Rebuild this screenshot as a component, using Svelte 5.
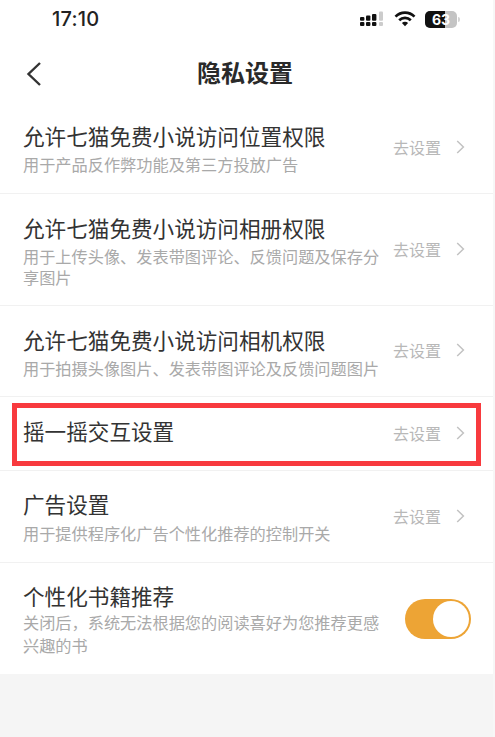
<script>
  const rows = [
    { title: '允许七猫免费小说访问位置权限', sub: '用于产品反作弊功能及第三方投放广告', h: 'r1' },
    { title: '允许七猫免费小说访问相册权限', sub: '用于上传头像、发表带图评论、反馈问题及保存分享图片', h: 'r2' },
    { title: '允许七猫免费小说访问相机权限', sub: '用于拍摄头像图片、发表带图评论及反馈问题图片', h: 'r3' },
    { title: '摇一摇交互设置', sub: '', h: 'r4', boxed: true },
    { title: '广告设置', sub: '用于提供程序化广告个性化推荐的控制开关', h: 'r5' }
  ];
</script>

<div class="page">
  <div class="status">
    <span class="time">17:10</span>
    <div class="icons">
      <svg width="26" height="16" viewBox="0 0 26 16">
        <g fill="#111">
          <rect x="1" y="6" width="4.4" height="3.8" rx="1"/><rect x="1" y="11" width="4.4" height="4" rx="1"/>
          <rect x="7" y="4.5" width="4.4" height="5.3" rx="1"/><rect x="7" y="11" width="4.4" height="4" rx="1"/>
          <rect x="13" y="3" width="4.4" height="6.8" rx="1"/><rect x="13" y="11" width="4.4" height="4" rx="1"/>
        </g>
        <g fill="#ccc">
          <rect x="20" y="0.5" width="4" height="9.3" rx="1"/><rect x="20" y="11" width="4" height="4" rx="1"/>
        </g>
      </svg>
      <svg class="wifi" width="22" height="16" viewBox="0 0 22 16">
        <path d="M1.5 5.6 A13.5 13.5 0 0 1 20.5 5.6" fill="none" stroke="#111" stroke-width="2.7"/>
        <path d="M5.2 9.2 A8.3 8.3 0 0 1 16.8 9.2" fill="none" stroke="#111" stroke-width="2.7"/>
        <path d="M7.9 12 L11 15.2 L14.1 12 A4.4 4.4 0 0 0 7.9 12Z" fill="#111"/>
      </svg>
      <div class="battery"><div class="fill"></div><span>63</span></div>
      <div class="nub"></div>
    </div>
  </div>

  <div class="nav">
    <svg class="back" width="18" height="26" viewBox="0 0 18 26">
      <path d="M15 2 L3.5 13 L15 24" fill="none" stroke="#333" stroke-width="2.4"/>
    </svg>
    <h1>隐私设置</h1>
  </div>

  <div class="list">
    {#each rows as row}
      <div class="row {row.h}">
        <div class="text">
          <div class="title">{row.title}</div>
          {#if row.sub}<div class="sub">{row.sub}</div>{/if}
        </div>
        <div class="action">
          <span>去设置</span>
          <svg width="9" height="14" viewBox="0 0 9 14">
            <path d="M1.2 1 L7.4 7 L1.2 13" fill="none" stroke="#c2c2c2" stroke-width="1.5"/>
          </svg>
        </div>
        {#if row.boxed}<div class="redbox"></div>{/if}
      </div>
    {/each}
    <div class="row r6">
      <div class="text">
        <div class="title">个性化书籍推荐</div>
        <div class="sub">关闭后，系统无法根据您的阅读喜好为您推荐更感兴趣的书</div>
      </div>
      <div class="toggle"><div class="knob"></div></div>
    </div>
  </div>
</div>

<style>
  :global(body) {
    margin: 0;
    background: #f5f5f5;
  }
  .page {
    width: 493px;
    height: 737px;
    background: #f5f5f5;
    border-right: 2px solid #f7f7f7;
    font-family: "Noto Sans CJK SC", "Noto Sans", sans-serif;
    overflow: hidden;
  }
  .status {
    height: 38px;
    background: #fff;
    display: flex;
    justify-content: space-between;
    align-items: center;
    padding: 0 33px 0 52px;
  }
  .time {
    font-family: Inter, "Liberation Sans", sans-serif;
    font-size: 20px;
    font-weight: 500;
    color: #222;
    letter-spacing: 0.2px;
  }
  .icons {
    display: flex;
    align-items: center;
  }
  .wifi {
    margin-left: 9px;
  }
  .battery {
    position: relative;
    margin-left: 9px;
    width: 32px;
    height: 17px;
    border-radius: 5px;
    background: #c4c4c4;
    overflow: hidden;
    display: flex;
    align-items: center;
    justify-content: center;
  }
  .fill {
    position: absolute;
    left: 0;
    top: 0;
    bottom: 0;
    width: 20px;
    background: #111;
  }
  .battery span {
    position: relative;
    color: #fff;
    font-family: Inter, "Liberation Sans", sans-serif;
    font-size: 14px;
    font-weight: 700;
    line-height: 17px;
  }
  .nub {
    width: 2px;
    height: 5px;
    margin-left: 1px;
    background: #d4d4d4;
    border-radius: 0 2px 2px 0;
  }
  .nav {
    height: 72px;
    background: #fff;
    position: relative;
    display: flex;
    align-items: center;
    justify-content: center;
  }
  .back {
    position: absolute;
    left: 25px;
    top: 23px;
  }
  h1 {
    margin: 0 3px 4px 0;
    font-size: 24px;
    font-weight: 700;
    color: #2a2a2a;
    line-height: 68px;
  }
  .list {
    background: #fff;
  }
  .row {
    position: relative;
    display: flex;
    justify-content: space-between;
    padding: 0 19px 0 23px;
    box-sizing: border-box;
    border-bottom: 1px solid #f1f1f1;
  }
  .r1 { height: 84px; }
  .r2 { height: 112px; }
  .r3 { height: 91px; }
  .r4 { height: 74px; }
  .r5 { height: 92px; }
  .r6 { height: 111px; border-bottom: 0; }
  .text {
    width: 362px;
    padding-top: 11px;
  }
  .r2 .text, .r3 .text, .r4 .text {
    padding-top: 19px;
  }
  .r5 .text, .r6 .text {
    padding-top: 18px;
  }
  .title {
    font-size: 21.6px;
    line-height: 30px;
    color: #333;
  }
  .sub {
    margin-top: 3px;
    font-size: 16.2px;
    line-height: 21px;
    color: #a9a9a9;
  }
  .r5 .sub {
    margin-top: 4px;
  }
  .r6 .sub {
    margin-top: 0;
    line-height: 22.5px;
  }
  .action {
    position: absolute;
    right: 28px;
    top: 0;
    bottom: 0;
    display: flex;
    align-items: center;
    gap: 15px;
    color: #b8b8b8;
    font-size: 16px;
  }
  .r1 .action { padding-bottom: 10px; }
  .r2 .action { padding-bottom: 2px; }
  .r3 .action { padding-bottom: 2px; }
  .r4 .action { padding-bottom: 2px; }
  .r5 .action { padding-bottom: 2px; }
  .redbox {
    position: absolute;
    left: 12px;
    right: 12px;
    top: 6px;
    height: 63px;
    box-sizing: border-box;
    border: 5.5px solid #f83a3e;
  }
  .toggle {
    position: absolute;
    left: 405px;
    top: 36px;
    width: 66px;
    height: 40px;
    border-radius: 20px;
    background: #eda435;
  }
  .knob {
    position: absolute;
    right: 2px;
    top: 2px;
    width: 36px;
    height: 36px;
    border-radius: 50%;
    background: #fff;
  }
</style>
